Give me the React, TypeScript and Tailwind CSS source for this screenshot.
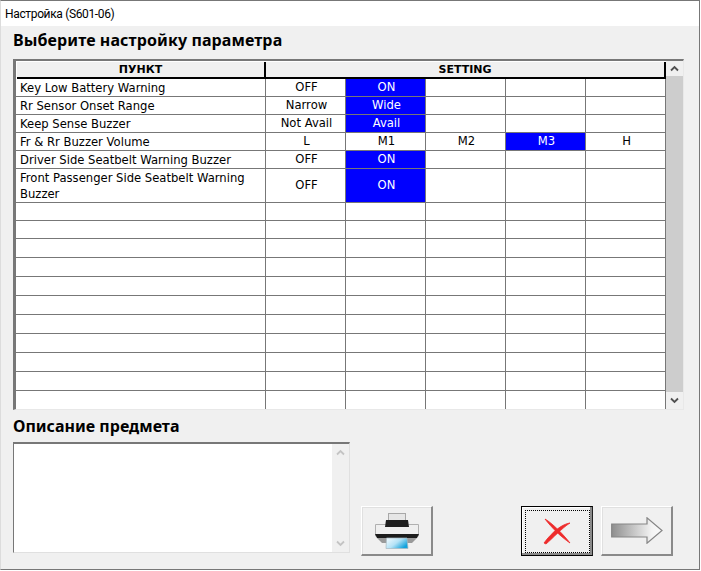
const rows: { h: string; name: string; cells: string[]; on: number }[] = [
  { h: "h-[18px] border-b", name: "Key Low Battery Warning", cells: ["OFF", "ON", "", "", ""], on: 1 },
  { h: "h-[18px] border-b", name: "Rr Sensor Onset Range", cells: ["Narrow", "Wide", "", "", ""], on: 1 },
  { h: "h-[18px] border-b", name: "Keep Sense Buzzer", cells: ["Not Avail", "Avail", "", "", ""], on: 1 },
  { h: "h-[18px] border-b", name: "Fr & Rr Buzzer Volume", cells: ["L", "M1", "M2", "M3", "H"], on: 3 },
  { h: "h-[18px] border-b", name: "Driver Side Seatbelt Warning Buzzer", cells: ["OFF", "ON", "", "", ""], on: 1 },
  { h: "h-[34px] border-b", name: "Front Passenger Side Seatbelt Warning Buzzer", cells: ["OFF", "ON", "", "", ""], on: 1 },
  ...Array.from({ length: 11 }, (_, i) => ({
    h: i < 2 ? "h-[18px] border-b" : i === 10 ? "h-[18px]" : "h-[19px] border-b",
    name: "",
    cells: ["", "", "", "", ""],
    on: -1,
  })),
];

function Chevron({ up, color }: { up: boolean; color: string }) {
  return (
    <svg width="9" height="7" viewBox="0 0 9 7">
      <path d={up ? "M1 5.5 L4.5 2 L8 5.5" : "M1 1.5 L4.5 5 L8 1.5"} fill="none" stroke={color} strokeWidth="1.8" />
    </svg>
  );
}

function Printer() {
  return (
    <svg width="44" height="36" viewBox="0 0 44 36">
      <defs>
        <linearGradient id="paper" x1="0" y1="0" x2="1" y2="0.6">
          <stop offset="0" stopColor="#f6fcff" />
          <stop offset="0.55" stopColor="#b4e2f6" />
          <stop offset="1" stopColor="#12a2dc" />
        </linearGradient>
      </defs>
      <rect x="13.5" y="0.5" width="17" height="8" fill="#e6e6e6" stroke="#a8a8a8" />
      <path d="M0.5 11.5 H43.5 V23 H0.5 Z" fill="#efefef" stroke="#b0b0b0" />
      <path d="M11 7 H33 L34 14 H10 Z" fill="#1e1e1e" />
      <path d="M0 21 H44 L42 25 H2 Z" fill="#1c1c1c" />
      <path d="M2 25 H42 L37 30 H7 Z" fill="#9a9a9a" />
      <path d="M11.5 25 H32 L33 35.5 H11 Z" fill="url(#paper)" stroke="#a6b8c0" strokeWidth="0.7" />
    </svg>
  );
}

function Cross() {
  return (
    <svg width="28" height="27" viewBox="0 0 28 27" className="-ml-[2px]">
      <path d="M2 1 C9 5 20 16 27 25 C18 19 8 9 2 1 Z" fill="#ee2b2b" stroke="#ee2b2b" strokeWidth="0.8" />
      <path d="M27 5 C19 6 9 14 1 25 L3 26 C10 20 19 10 27 5 Z" fill="#ee2b2b" stroke="#ee2b2b" strokeWidth="0.8" />
    </svg>
  );
}

function Arrow() {
  return (
    <svg width="52" height="27" viewBox="0 0 52 27">
      <defs>
        <linearGradient id="arr" x1="0" y1="0" x2="1" y2="0">
          <stop offset="0" stopColor="#8e8e8e" />
          <stop offset="0.8" stopColor="#f4f4f4" />
          <stop offset="1" stopColor="#fafafa" />
        </linearGradient>
      </defs>
      <path d="M0.7 7 H36 V0.8 L51 13.5 L36 26.2 V20 H0.7 Z" fill="url(#arr)" stroke="#858585" strokeWidth="1.2" />
    </svg>
  );
}

function Btn({ children, focused }: { children: React.ReactNode; focused?: boolean }) {
  if (focused) {
    return (
      <div className="w-[72px] h-[50px] border border-black bg-[#f0f0f0] pt-[3px] pl-[3px] pr-[2px] pb-[2px] border-r-[#222] shadow-[inset_-2px_-2px_0_#8a8a8a,inset_1px_1px_0_#fff]">
        <div className="w-full h-full border border-dotted border-black flex items-center justify-center">{children}</div>
      </div>
    );
  }
  return (
    <div className="w-[72px] h-[50px] bg-[#f0f0f0] border-t border-l border-white border-r-2 border-b-2 border-r-[#8a8a8a] border-b-[#8a8a8a] shadow-[inset_1px_1px_0_#e0e0e0] flex items-center justify-center">
      {children}
    </div>
  );
}

export default function App() {
  return (
    <div className="w-[701px] h-[571px] bg-white font-['DejaVu_Sans',sans-serif] text-black overflow-hidden">
      <div className="w-[700px] h-[570px] border-t border-r border-b border-l border-t-[#777] border-r-[#777] border-b-[#777] border-l-[#dcdcdc] flex flex-col">
        <div className="h-[25px] bg-white pl-[4px] pt-[5px] text-[12px] leading-[16px] tracking-[-0.35px] font-['Roboto',sans-serif] shrink-0">
          Настройка (S601-06)
        </div>
        <div className="flex-1 bg-[#f0f0f0] pl-[12px] flex flex-col">
          <div className="h-[33px] pt-[4px] text-[16px] leading-[20px] tracking-[0.1px] font-bold font-['Noto_Sans',sans-serif]">Выберите настройку параметра</div>
          <div className="w-[671px] h-[351px] bg-white border-t-2 border-l-[3px] border-t-[#777] border-l-[#777] border-r border-r-[#e8e8e8] border-b border-b-[#e8e8e8] flex">
            <div className="w-[650px] flex flex-col text-[11.6px]">
              <div className="h-[18px] flex bg-[#f0f0f0] border-t border-l border-white font-bold text-[11px] leading-[15px] shrink-0">
                <div className="w-[249px] text-center border-r-2 border-black border-b-2">ПУНКТ</div>
                <div className="flex-1 text-center border-r-2 border-black border-b-2">SETTING</div>
              </div>
              {rows.map((r, i) => (
                <div key={i} className={`${r.h} flex border-[#777] shrink-0`}>
                  <div className="w-[250px] border-r border-[#777] pl-[4px] leading-[16px] overflow-hidden flex items-center">
                    <span>{r.name}</span>
                  </div>
                  {r.cells.map((c, j) => (
                    <div
                      key={j}
                      className={`w-[80px] border-r border-[#777] pl-[2px] flex items-center justify-center ${r.on === j ? "bg-[#0000ff] text-white" : ""}`}
                    >
                      {c}
                    </div>
                  ))}
                </div>
              ))}
            </div>
            <div className="flex-1 bg-[#f0f0f0] flex flex-col items-center">
              <div className="h-[15px] flex items-center justify-center">
                <Chevron up color="#505050" />
              </div>
              <div className="w-full flex-1 bg-[#cdcdcd]" />
              <div className="h-[17px] flex items-center justify-center">
                <Chevron up={false} color="#505050" />
              </div>
            </div>
          </div>
          <div className="h-[32px] pt-[6px] text-[16px] leading-[20px] font-bold font-['Noto_Sans',sans-serif]">Описание предмета</div>
          <div className="flex">
            <div className="w-[337px] h-[111px] bg-white border-t-2 border-l border-t-[#777] border-l-[#777] border-r border-b border-r-[#e0e0e0] border-b-[#e0e0e0] flex justify-end">
              <div className="w-[17px] bg-[#f0f0f0] flex flex-col justify-between items-center py-[5px]">
                <Chevron up color="#c4c4c4" />
                <Chevron up={false} color="#c4c4c4" />
              </div>
            </div>
            <div className="flex-1 flex items-start pt-[64px] pl-[11px]">
              <Btn><Printer /></Btn>
              <div className="w-[88px]" />
              <Btn focused><Cross /></Btn>
              <div className="w-[8px]" />
              <Btn><Arrow /></Btn>
            </div>
          </div>
        </div>
      </div>
    </div>
  );
}
